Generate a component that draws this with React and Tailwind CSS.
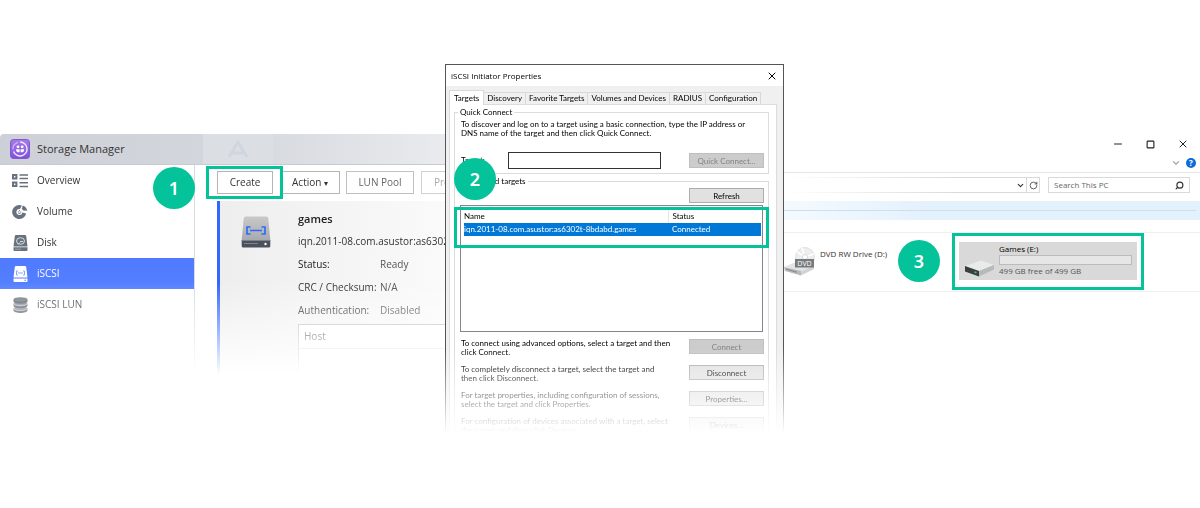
import { ChevronDown, Minus, RotateCw, Search, Square, X } from 'lucide-react';
import clsx from 'clsx';

const navItems = [
  { label: 'Overview', icon: OverviewIcon },
  { label: 'Volume', icon: VolumeIcon },
  { label: 'Disk', icon: DiskIcon },
  { label: 'iSCSI', icon: IscsiIcon, active: true },
  { label: 'iSCSI LUN', icon: LunIcon, faded: true }
];

const details = [
  { label: 'Status:', value: 'Ready', tone: 'text-[#222]' },
  { label: 'CRC / Checksum:', value: 'N/A', tone: 'text-[#333]' },
  { label: 'Authentication:', value: 'Disabled', tone: 'text-[#333]' }
];

const tabs = ['Targets', 'Discovery', 'Favorite Targets', 'Volumes and Devices', 'RADIUS', 'Configuration'];

const targetActions = [
  { lines: ['To connect using advanced options, select a target and then', 'click Connect.'], button: 'Connect', disabled: true },
  { lines: ['To completely disconnect a target, select the target and', 'then click Disconnect.'], button: 'Disconnect' },
  { lines: ['For target properties, including configuration of sessions,', 'select the target and click Properties.'], button: 'Properties...' },
  { lines: ['For configuration of devices associated with a target, select', 'the target and then click Devices.'], button: 'Devices...' }
];

function OverviewIcon() {
  return (
    <svg viewBox="0 0 16 14" className="h-[14px] w-4" fill="none" stroke="#68727f">
      <path d="M1 1h3.4v3.4H1zM1 8.6h3.4V12H1z" strokeWidth="2" />
      <path d="M7.5 .9H16M7.5 4.6H16M7.5 8.7H16M7.5 12.4H16" strokeWidth="1.5" />
    </svg>
  );
}

function VolumeIcon() {
  return (
    <svg viewBox="0 0 17 16" className="h-4 w-[17px]">
      <path d="M8 .5A7.5 7.5 0 1 0 15 9.5L11 8.5A3.2 3.2 0 1 1 8.5 4.9L10.5 1Z" fill="#68727f" />
      <path d="M11.5 1.2A7.5 7.5 0 0 1 16.2 6.7L11.8 6.5L10.4 4.5Z" fill="#68727f" />
      <path d="M6.3 8h1.2M8.7 8h1.2M7.5 6.7h1M7 9.5h2" stroke="#68727f" strokeWidth="1" />
    </svg>
  );
}

function DiskIcon() {
  return (
    <svg viewBox="0 0 15 16" className="h-4 w-[15px]">
      <path d="M3 0h9q1 0 1.2 1L14.5 11.5H.5L1.8 1Q2 0 3 0Z" fill="#68727f" />
      <path d="M.5 12.3h14V15q0 1-1 1h-12q-1 0-1-1Z" fill="#68727f" />
      <ellipse cx="7.5" cy="6" rx="4" ry="3.3" fill="none" stroke="#d8dbe0" />
      <path d="M7 6.5h3M5 9.5l2-2" stroke="#d8dbe0" />
      <path d="M2 14.2h6" stroke="#9aa1ab" />
    </svg>
  );
}

function IscsiIcon() {
  return (
    <svg viewBox="0 0 15 16" className="h-4 w-[15px]">
      <path d="M3 0h9q1 0 1.2 1L14.5 11.5H.5L1.8 1Q2 0 3 0Z" fill="#fff" />
      <path d="M.5 12.5h14V15q0 1-1 1h-12q-1 0-1-1Z" fill="#fff" />
      <path d="M5 5H3.5v4H5M10 5h1.5v4H10M5 7h5" fill="none" stroke="#8aa6ff" />
      <circle cx="12.2" cy="14.2" r=".8" fill="#5a80fa" />
    </svg>
  );
}

function LunIcon() {
  return (
    <svg viewBox="0 0 15 16" className="h-4 w-[15px]">
      <path d="M.5 11.5v2C1 16.8 14 16.8 14.5 13.5v-2Z" fill="#5f6772" />
      <ellipse cx="7.5" cy="11.3" rx="7" ry="2.3" fill="#9298a1" stroke="#fff" strokeWidth=".5" />
      <path d="M.5 6.8v2C1 12 14 12 14.5 8.8v-2Z" fill="#5f6772" />
      <ellipse cx="7.5" cy="6.6" rx="7" ry="2.3" fill="#9298a1" stroke="#fff" strokeWidth=".5" />
      <path d="M.5 2.4v2C1 7.4 14 7.4 14.5 4.4v-2Z" fill="#5f6772" />
      <ellipse cx="7.5" cy="2.4" rx="7" ry="2.2" fill="#777e88" />
    </svg>
  );
}

function AppIcon() {
  return (
    <svg viewBox="0 0 20 20" className="size-5">
      <defs>
        <linearGradient id="app" x1="0" y1="0" x2="0" y2="1">
          <stop offset="0" stopColor="#a67be8" />
          <stop offset="1" stopColor="#7f4fe0" />
        </linearGradient>
      </defs>
      <rect x=".5" y=".5" width="19" height="19" rx="3" fill="url(#app)" stroke="#8156cf" />
      <path d="M10 3A7 7 0 1 1 3.5 12.5" fill="none" stroke="#f0e8ff" strokeWidth="1.4" />
      <path d="M8 3.3A7 7 0 0 0 3 10.5" fill="none" stroke="#cdb6f5" strokeWidth="1.2" />
      <circle cx="8" cy="7.8" r="1.4" fill="#fff" />
      <circle cx="12.2" cy="7.8" r="1.4" fill="#fff" />
      <path d="M6 10.2h3.6v3H7.5Q6 12.5 6 10.2ZM10.6 10.2h3.6q0 2.3-1.5 3h-2.1z" fill="#fff" />
    </svg>
  );
}

function TargetIcon() {
  return (
    <svg viewBox="0 0 30 32" className="h-8 w-[30px]">
      <defs>
        <linearGradient id="lid" x1="0" y1="0" x2="0" y2="1">
          <stop offset="0" stopColor="#c9c9c9" />
          <stop offset="1" stopColor="#a9aaac" />
        </linearGradient>
      </defs>
      <path d="M5 .5h20q2 0 2.3 2L29.3 24H.7L2.7 2.5Q3 .5 5 .5Z" fill="url(#lid)" />
      <path d="M.7 24h28.6v6q0 1.5-1.5 1.5H2.2Q.7 31.5.7 30Z" fill="#4a515d" />
      <path d="M.7 24.5h28.6" stroke="#7d838c" />
      <path d="M3 27.5h14" stroke="#7d838c" />
      <circle cx="24.5" cy="28" r="1.2" fill="#fff" />
      <path d="M9.5 11H6v7h3.5M20.5 11H24v7h-3.5M9 14.5h12" fill="none" stroke="#2f6bff" strokeWidth="1.7" />
    </svg>
  );
}

function DvdIcon() {
  return (
    <svg viewBox="0 0 31 29" className="h-[29px] w-[31px] shrink-0">
      <circle cx="21" cy="10" r="9.5" fill="#eceeef" stroke="#d5d7d9" strokeWidth=".7" />
      <path d="M21 10L13 5M21 10L18 1M21 10l9-3" stroke="#fff" strokeWidth="1.5" />
      <circle cx="21" cy="10" r="2.5" fill="#fff" stroke="#c8cacc" strokeWidth=".7" />
      <path d="M0 20L14 14L30 18L17 25Z" fill="#e3e4e5" />
      <path d="M0 20L17 24V28.5L1 24Z" fill="#b9babc" />
      <path d="M17 24.5L30 18.5V22L17 28.5Z" fill="#d2d3d4" />
      <path d="M2 22l11 3.3" stroke="#858789" strokeWidth="1.2" />
      <rect x="11" y="12" width="19" height="8.5" fill="#77797b" />
      <text x="20.5" y="19" textAnchor="middle" fontSize="7" fill="#fff" fontFamily="Open Sans, sans-serif">DVD</text>
    </svg>
  );
}

function DriveIcon() {
  return (
    <svg viewBox="0 0 31 17" className="h-[17px] w-[31px] shrink-0">
      <path d="M1 6L17 .5L30 5L15 11Z" fill="#e9eaea" />
      <path d="M1 6L15 11V16.5L1 11.5Z" fill="#3b3d3f" />
      <path d="M15 11L30 5V9.5L15 16.5Z" fill="#b7b9bb" />
      <path d="M10.5 12l2 .7" stroke="#21d07a" strokeWidth="1.5" />
    </svg>
  );
}

function Step({ children, className }) {
  return (
    <span className={clsx('flex size-[42px] items-center justify-center rounded-full bg-[#04c39a] font-["Noto_Sans",sans-serif] text-lg font-semibold text-white', className)}>
      {children}
    </span>
  );
}

function DialogButton({ children, disabled, className }) {
  return (
    <button
      type="button"
      disabled={disabled}
      className={clsx('h-[15px] w-[75px] shrink-0 border leading-[12px]', disabled ? 'border-[#bfbfbf] bg-[#ccc] text-[#838383]' : 'border-[#adadad] bg-[#e1e1e1]', className)}
    >
      {children}
    </button>
  );
}

function StorageManager() {
  return (
    <section className='mt-[70px] min-w-0 font-["Open_Sans",sans-serif] text-[10px] text-[#333]'>
      <header className="flex h-[31px] items-center gap-[7px] rounded-tl border-b border-[#c8ccd2] bg-linear-to-r from-[#cdd0d6] via-[#d3d6dc] to-[#e9ebee] pl-[10px]">
        <AppIcon />
        <h1 className="w-[96px] text-[11px] whitespace-nowrap">Storage Manager</h1>
        <span className="ml-[63px] flex h-full w-[70px] items-center justify-center bg-[#dbdfe4]">
          <svg viewBox="0 0 20 18" className="h-[18px] w-5" fill="none" stroke="#cfd6dd" strokeWidth="3">
            <path d="M1 17L10 2L19 17M5 13h10" />
          </svg>
        </span>
      </header>
      <div className="flex h-[214px] mask-[linear-gradient(to_bottom,#000_55%,transparent_98%)]">
        <nav className="w-[195px] shrink-0 border-r border-[#d5dde3]">
          {navItems.map(({ label, icon: Icon, active, faded }) => (
            <a
              key={label}
              href="#"
              className={clsx('flex h-[31px] items-center gap-[9px] pl-3', active && 'bg-linear-to-b from-[#4f7aff] to-[#5580ff] text-white', faded && 'text-[#444]')}
            >
              <span className="flex w-4 justify-center"><Icon /></span>
              {label}
            </a>
          ))}
        </nav>
        <div className="min-w-0 grow overflow-hidden pl-[11px]">
          <div className="flex items-center pt-px whitespace-nowrap">
            <span className="z-10 -mr-[3px] shrink-0 border-3 border-[#04c39a] py-[2px] pr-[7px] pl-2">
              <button type="button" className="block h-[23px] w-[56px] border border-[#b5b5b5]">Create</button>
            </span>
            <button type="button" className="h-[23px] w-[60px] shrink-0 border border-[#b5b5b5]">Action <span className="text-[8px]">▾</span></button>
            <button type="button" className="ml-[6px] h-[23px] w-[68px] shrink-0 border border-[#c0c0c0] text-[#666]">LUN Pool</button>
            <button type="button" className="ml-[7px] h-[23px] w-[68px] shrink-0 border border-[#d0d0d0] pl-3 text-left text-[#aaa]">Properties</button>
          </div>
          <div className="mt-[2px] ml-[11px] flex h-[174px] border-l-3 border-[#3366ff] bg-linear-to-r from-[#eee] to-[#fafafa] pt-[6px]">
            <div className="w-[78px] shrink-0 pt-[9px] pl-[21px]">
              <TargetIcon />
            </div>
            <div className="min-w-0 grow whitespace-nowrap">
              <h2 className="text-[11px] leading-[23px] font-semibold text-[#222]">games</h2>
              <p className="leading-[23px]">iqn.2011-08.com.asustor:as6302t-8bdabd.games</p>
              <dl className="grid grid-cols-[82px_1fr] leading-[23px]">
                {details.map((item) => (
                  <div key={item.label} className={clsx('contents', item.tone)}>
                    <dt>{item.label}</dt>
                    <dd className="text-[#555]">{item.value}</dd>
                  </div>
                ))}
              </dl>
              <div className="mt-[2px] h-12 border-t border-l border-[#bbb] bg-white">
                <p className="border-b border-[#ddd] pl-[5px] leading-[23px] text-[#444]">Host</p>
              </div>
            </div>
          </div>
        </div>
      </div>
    </section>
  );
}

function InitiatorDialog() {
  return (
    <section className='flex h-[369px] flex-col border border-[#555] bg-[#f0f0f0] font-[Lato,sans-serif] text-[8px] leading-[9px] text-black mask-[linear-gradient(to_bottom,#000_77%,transparent_100%)]'>
      <header className="flex h-[21px] shrink-0 items-center justify-between bg-white pr-[5px] pl-[5px]">
        <h2 className='font-["Open_Sans",sans-serif]'>iSCSI Initiator Properties</h2>
        <button type="button" aria-label="Close"><X size={12} strokeWidth={2} /></button>
      </header>
      <div className="flex items-end pt-1 pl-[3px] whitespace-nowrap">
        {tabs.map((tab, i) => (
          <button key={tab} type="button" className={clsx('border border-b-0 border-[#d9d9d9]', i === 0 ? 'z-10 -mb-px h-[15px] bg-white px-1' : 'h-3 border-l-0 px-[3px]')}>{tab}</button>
        ))}
      </div>
      <div className="mr-[6px] ml-[3px] min-h-0 grow overflow-hidden border border-[#dcdcdc] bg-white pt-[3px] pr-[7px] pl-1">
        <fieldset className="h-[66px] border border-[#dcdcdc] pr-1 pl-[6px]">
          <legend className="-ml-[3px] px-[2px]">Quick Connect</legend>
          <p className="pt-[3px] whitespace-nowrap">
            To discover and log on to a target using a basic connection, type the IP address or<br />
            DNS name of the target and then click Quick Connect.
          </p>
          <div className="mt-[14px] flex items-center">
            <label htmlFor="target" className="w-[47px]">Target:</label>
            <input id="target" className="h-[17px] w-[153px] border border-[#333] px-1" />
            <DialogButton disabled className="ml-auto">Quick Connect...</DialogButton>
          </div>
        </fieldset>
        <fieldset className="mt-[3px] h-[300px] border border-[#dcdcdc] pr-1 pl-[5px]">
          <legend className="-ml-[2px] px-[2px]">Discovered targets</legend>
          <div className="flex justify-end pt-[2px]">
            <DialogButton>Refresh</DialogButton>
          </div>
          <div className="relative mt-[2px] mr-px h-[127px] border border-[#82878f] pt-1 pr-px pl-[3px]">
            <table className="w-full table-fixed text-left">
              <thead>
                <tr className="h-[13px]">
                  <th className="w-[204px] border-r border-[#e5e5e5] font-normal">Name</th>
                  <th className="pl-1 font-normal">Status</th>
                </tr>
              </thead>
              <tbody>
                <tr className="h-[13px] bg-[#0078d7] text-white">
                  <td>iqn.2011-08.com.asustor:as6302t-8bdabd.games</td>
                  <td className="pl-1">Connected</td>
                </tr>
              </tbody>
            </table>
            <div className="absolute -inset-x-[7px] top-px h-[41px] border-3 border-[#04c39a]" />
          </div>
          <div className="flex flex-col gap-2 pt-[7px] pl-px">
            {targetActions.map((action) => (
              <div key={action.button} className="flex items-start justify-between">
                <p className="whitespace-nowrap">{action.lines[0]}<br />{action.lines[1]}</p>
                <DialogButton disabled={action.disabled}>{action.button}</DialogButton>
              </div>
            ))}
          </div>
        </fieldset>
      </div>
    </section>
  );
}

function ExplorerWindow() {
  return (
    <section className='mt-[70px] min-w-0 font-["Open_Sans",sans-serif] text-[8px] text-[#333]'>
      <header className="flex h-5 items-center justify-end gap-[22px] pr-[11px] text-[#222]">
        <button type="button" aria-label="Minimize"><Minus size={12} /></button>
        <button type="button" aria-label="Maximize"><Square size={9} strokeWidth={3} /></button>
        <button type="button" aria-label="Close"><X size={12} /></button>
      </header>
      <div className="flex h-[19px] items-center justify-end gap-[5px] border-b border-[#e6e6e6] pr-1">
        <ChevronDown size={10} strokeWidth={3} className="text-[#aaa]" />
        <button type="button" className="flex size-[10px] items-center justify-center rounded-full bg-[#0a6cd6] font-bold text-white">?</button>
      </div>
      <div className="flex gap-2 pt-1 pr-[10px] pb-2">
        <div className="flex h-4 grow items-center justify-end border border-l-0 border-[#d9d9d9] mask-[linear-gradient(to_right,transparent,#000_70%)]">
          <button type="button" aria-label="Recent locations" className="px-px"><ChevronDown size={9} strokeWidth={3} /></button>
          <button type="button" aria-label="Refresh" className="flex h-full w-[13px] items-center justify-center border-l border-[#d9d9d9]"><RotateCw size={9} strokeWidth={2} /></button>
        </div>
        <label className="flex h-4 w-[142px] items-center border border-[#d9d9d9] px-[5px]">
          <input aria-label="Search This PC" placeholder="Search This PC" className="w-0 grow placeholder:text-[#666]" />
          <Search size={9} strokeWidth={3} className="-scale-x-100" />
        </label>
      </div>
      <div className="h-[19px] bg-linear-to-r from-[#f4faff] to-[#e3f1fd] to-35%">
        <div className="mr-1 h-[10px] border-b border-[#cfdeeb]" />
      </div>
      <div className="mt-3 flex h-[60px] items-start border-y border-[#f0f0f0]">
        <div className="flex min-w-0 pt-[14px]">
          <DvdIcon />
          <span className="pl-[5px] leading-[14px] whitespace-nowrap">DVD RW Drive (D:)</span>
        </div>
        <Step className="mt-[7px] mr-3 ml-auto shrink-0">3</Step>
        <div className="mr-14 w-[192px] shrink-0 border-3 border-[#04c39a] px-1 pt-[6px] pb-[7px]">
          <div className="flex h-[38px] items-end gap-[4px] bg-[#d9d9d9] pr-[5px] pb-[3px] pl-[5px]">
            <DriveIcon />
            <div className="grow">
              <p className="leading-[12px] text-black">Games (E:)</p>
              <div className="h-[10px] border border-[#bcbcbc] bg-[#e6e6e6]" />
              <p className="leading-[12px] text-[#555]">499 GB free of 499 GB</p>
            </div>
          </div>
        </div>
      </div>
    </section>
  );
}

export default function App() {
  return (
    <main className="grid min-h-screen grid-cols-[445fr_339px_416fr] items-start bg-white pt-16">
      <div className="relative min-w-0">
        <StorageManager />
        <Step className="absolute top-[103px] left-[153px]">1</Step>
      </div>
      <div className="relative">
        <InitiatorDialog />
        <Step className="absolute top-[94px] left-[9px]">2</Step>
      </div>
      <ExplorerWindow />
    </main>
  );
}
